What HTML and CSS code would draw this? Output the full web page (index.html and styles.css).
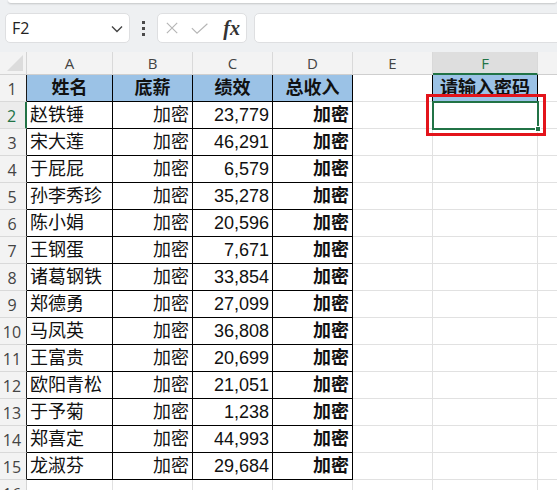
FILE: index.html
```html
<!DOCTYPE html>
<html lang="zh">
<head>
<meta charset="utf-8">
<link rel="stylesheet" href="styles.css">
</head>
<body>
<div class="app">
  <div class="top">
    <div class="ribbon-edge"></div>
    <div class="toolbar">
      <div class="namebox">
        <span class="ref">F2</span>
        <svg class="chev" width="12" height="8" viewBox="0 0 12 8"><path d="M1 1.5 L6 6.5 L11 1.5" fill="none" stroke="#444" stroke-width="1.4"/></svg>
      </div>
      <div class="dots"><i></i><i></i><i></i></div>
      <div class="fxgroup">
        <svg width="14" height="14" viewBox="0 0 14 14"><path d="M1 1 L13 13 M13 1 L1 13" stroke="#b5b5b5" stroke-width="1.3" fill="none"/></svg>
        <svg width="20" height="13" viewBox="0 0 20 13"><path d="M1 6 L7 12 L19 1" stroke="#b5b5b5" stroke-width="1.3" fill="none"/></svg>
        <span class="fx">fx</span>
      </div>
      <div class="formula"></div>
    </div>
  </div>
  <div class="sheet">
    <div class="grid">
      <div class="corner"><span class="tri"></span></div>
      <div class="ch">A</div><div class="ch">B</div><div class="ch">C</div><div class="ch">D</div><div class="ch">E</div><div class="ch sel">F</div><div class="ch last"></div>

      <div class="rh">1</div>
      <div class="c hd">姓名</div><div class="c hd">底薪</div><div class="c hd">绩效</div><div class="c hd">总收入</div><div class="c"></div><div class="c hd pw">请输入密码</div><div class="c"></div>

      <div class="rh selr">2</div>
      <div class="c t">赵铁锤</div><div class="c t r">加密</div><div class="c t r">23,779</div><div class="c t r b">加密</div><div class="c"></div><div class="c"></div><div class="c"></div>

      <div class="rh">3</div>
      <div class="c t">宋大莲</div><div class="c t r">加密</div><div class="c t r">46,291</div><div class="c t r b">加密</div><div class="c"></div><div class="c"></div><div class="c"></div>

      <div class="rh">4</div>
      <div class="c t">于屁屁</div><div class="c t r">加密</div><div class="c t r">6,579</div><div class="c t r b">加密</div><div class="c"></div><div class="c"></div><div class="c"></div>

      <div class="rh">5</div>
      <div class="c t">孙李秀珍</div><div class="c t r">加密</div><div class="c t r">35,278</div><div class="c t r b">加密</div><div class="c"></div><div class="c"></div><div class="c"></div>

      <div class="rh">6</div>
      <div class="c t">陈小娟</div><div class="c t r">加密</div><div class="c t r">20,596</div><div class="c t r b">加密</div><div class="c"></div><div class="c"></div><div class="c"></div>

      <div class="rh">7</div>
      <div class="c t">王钢蛋</div><div class="c t r">加密</div><div class="c t r">7,671</div><div class="c t r b">加密</div><div class="c"></div><div class="c"></div><div class="c"></div>

      <div class="rh">8</div>
      <div class="c t">诸葛钢铁</div><div class="c t r">加密</div><div class="c t r">33,854</div><div class="c t r b">加密</div><div class="c"></div><div class="c"></div><div class="c"></div>

      <div class="rh">9</div>
      <div class="c t">郑德勇</div><div class="c t r">加密</div><div class="c t r">27,099</div><div class="c t r b">加密</div><div class="c"></div><div class="c"></div><div class="c"></div>

      <div class="rh">10</div>
      <div class="c t">马凤英</div><div class="c t r">加密</div><div class="c t r">36,808</div><div class="c t r b">加密</div><div class="c"></div><div class="c"></div><div class="c"></div>

      <div class="rh">11</div>
      <div class="c t">王富贵</div><div class="c t r">加密</div><div class="c t r">20,699</div><div class="c t r b">加密</div><div class="c"></div><div class="c"></div><div class="c"></div>

      <div class="rh">12</div>
      <div class="c t">欧阳青松</div><div class="c t r">加密</div><div class="c t r">21,051</div><div class="c t r b">加密</div><div class="c"></div><div class="c"></div><div class="c"></div>

      <div class="rh">13</div>
      <div class="c t">于予菊</div><div class="c t r">加密</div><div class="c t r">1,238</div><div class="c t r b">加密</div><div class="c"></div><div class="c"></div><div class="c"></div>

      <div class="rh">14</div>
      <div class="c t">郑喜定</div><div class="c t r">加密</div><div class="c t r">44,993</div><div class="c t r b">加密</div><div class="c"></div><div class="c"></div><div class="c"></div>

      <div class="rh">15</div>
      <div class="c t">龙淑芬</div><div class="c t r">加密</div><div class="c t r">29,684</div><div class="c t r b">加密</div><div class="c"></div><div class="c"></div><div class="c"></div>

      <div class="rh">16</div>
      <div class="c"></div><div class="c"></div><div class="c"></div><div class="c"></div><div class="c"></div><div class="c"></div><div class="c"></div>
    </div>
    <div class="cursor"><span class="handle"></span></div>
    <div class="mark"></div>
  </div>
</div>
</body>
</html>
```

FILE: styles.css
```css
* { box-sizing: border-box; }
html, body { margin: 0; padding: 0; background: #fff; overflow: hidden; }
body { width: 557px; height: 490px; font-family: "Liberation Sans", "Noto Sans CJK SC", sans-serif; }
.app { width: 557px; height: 490px; overflow: hidden; }

.top { height: 52px; background: #eef0f2; overflow: hidden; }
.ribbon-edge { height: 3px; margin: 0 0 0 8px; background: #fff; border-radius: 0 0 8px 8px; box-shadow: 0 1px 2px rgba(0,0,0,0.18); }
.toolbar { display: flex; align-items: stretch; height: 30px; margin-top: 10px; padding-left: 5px; }
.namebox { width: 125px; background: #fff; border: 1px solid #dedfe1; border-radius: 5px; display: flex; align-items: center; justify-content: space-between; padding: 0 6px 0 6px; }
.ref { font-size: 16px; color: #222; font-family: "Open Sans", "Liberation Sans", sans-serif; }
.chev { margin-top: 2px; }
.dots { width: 27px; display: flex; flex-direction: column; align-items: center; justify-content: center; gap: 3px; }
.dots i { display: block; width: 3px; height: 3px; background: #4a4a4a; }
.fxgroup { width: 90px; background: #fff; border: 1px solid #dedfe1; border-radius: 5px; display: flex; align-items: center; padding: 0 6px 0 8px; gap: 13px; }
.fx { font-family: "Liberation Serif", "DejaVu Serif", serif; font-style: italic; font-weight: bold; font-size: 20px; color: #333; margin-left: 2px; }
.formula { flex: 1; margin-left: 7px; margin-right: -10px; background: #fff; border: 1px solid #dedfe1; border-radius: 5px; }

.sheet { position: relative; }
.grid { display: grid; grid-template-columns: 27px 86px 80px 80px 80px 80px 105px 40px; grid-template-rows: 23px; grid-auto-rows: 27px; }
.corner { background: #f3f3f3; border-right: 1px solid #d4d4d4; border-bottom: 1px solid #d4d4d4; position: relative; }
.tri { position: absolute; right: 3px; bottom: 3px; width: 0; height: 0; border-left: 16px solid transparent; border-bottom: 16px solid #dcdcdc; }
.ch { background: #f3f3f3; border-right: 1px solid #d9d9d9; border-bottom: 1px solid #cfcfcf; text-align: center; font-family: "Open Sans", "Liberation Sans", sans-serif; font-size: 15px; line-height: 23px; color: #444; }
.ch.sel { background: #dedede; border-bottom: 2px solid #217346; color: #217346; }
.rh { background: #f3f3f3; border-right: 1px solid #1a1a1a; border-bottom: 1px solid #d9d9d9; text-align: center; font-family: "Open Sans", "Liberation Sans", sans-serif; font-size: 16px; line-height: 28px; color: #444; padding-right: 2px; }
.rh.selr { border-right: 2px solid #217346; color: #217346; background: #ececec; }
.grid .rh:nth-last-child(-n+8) { border-right-color: #d4d4d4; }

.c { border-right: 1px solid #e1e1e1; border-bottom: 1px solid #e1e1e1; font-size: 18px; line-height: 26px; color: #111; padding: 0 3px; white-space: nowrap; overflow: hidden; }
.c.t { border-right-color: #000; border-bottom-color: #000; }
.c.r { text-align: right; }
.c.b { font-weight: bold; }
.c.hd { background: #9bc2e6; font-weight: bold; text-align: center; border-right-color: #000; border-bottom-color: #000; }
.c.pw { border-left: 1px solid #000; margin-left: -1px; }

.cursor { position: absolute; left: 432px; top: 49px; width: 107px; height: 29px; border: 2px solid #217346; }
.handle { position: absolute; right: -4px; bottom: -4px; width: 6px; height: 6px; background: #217346; border: 1px solid #fff; }
.mark { position: absolute; left: 426px; top: 42px; width: 120px; height: 42px; border: 3px solid #e3141b; }
```
